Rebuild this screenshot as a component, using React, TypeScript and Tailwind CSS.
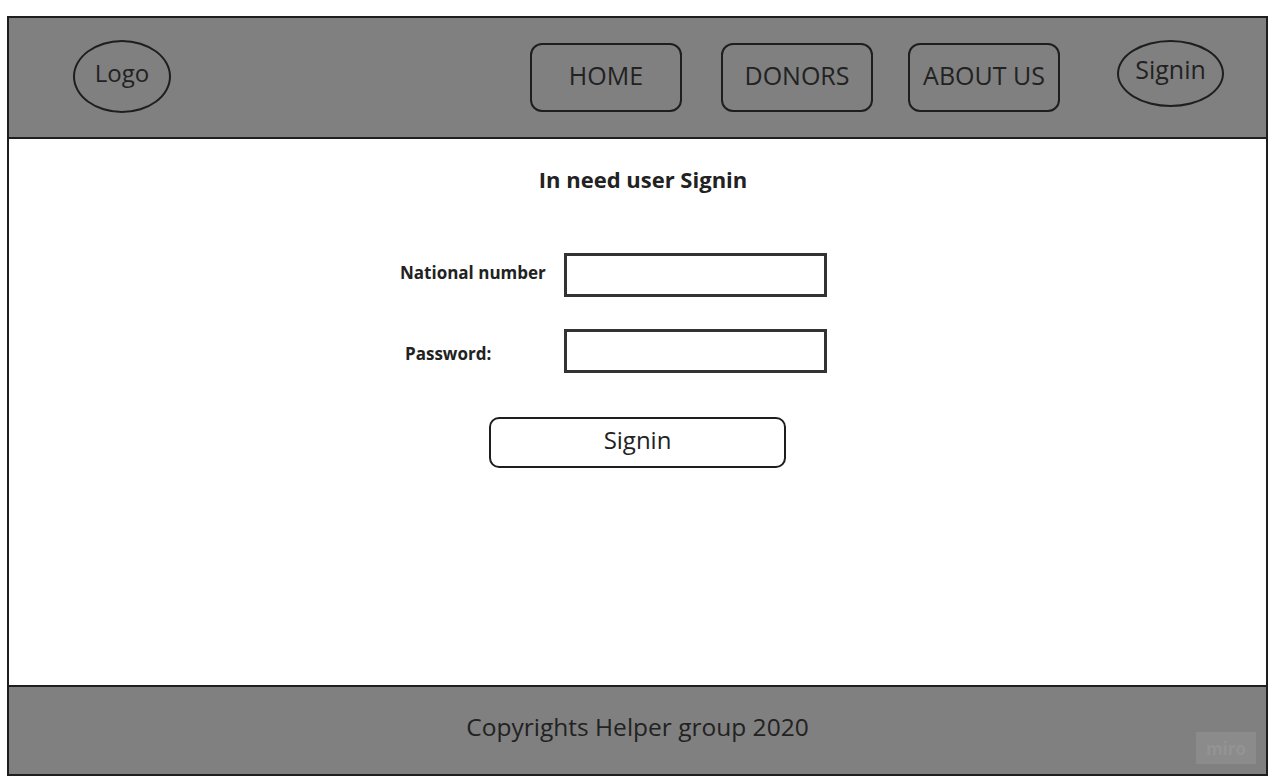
import React from "react";

export default function App() {
  const font = { fontFamily: '"Open Sans", "Noto Sans", sans-serif' };
  return (
    <div className="w-[1275px] h-[783px] bg-white pt-[16px] pl-[7px] text-[#222]" style={font}>
      <div className="w-[1261px] h-[760px] border-2 border-[#1e1e1e] flex flex-col">
        {/* Header */}
        <header className="h-[121px] bg-[#808080] border-b-2 border-[#1e1e1e] flex items-start pl-[64px] pr-[42px] shrink-0">
          <div className="mt-[22px] w-[98px] h-[73px] rounded-[50%] border-[2.5px] border-[#1e1e1e] flex items-center justify-center text-[24px] leading-none pb-[7px]">
            Logo
          </div>
          <div className="ml-auto flex items-start">
            <div className="mt-[25px] w-[152px] h-[69px] rounded-[12px] border-[2.5px] border-[#1e1e1e] flex items-center justify-center text-[25px] leading-none pb-[5px]">
              HOME
            </div>
            <div className="mt-[25px] ml-[39px] w-[152px] h-[69px] rounded-[12px] border-[2.5px] border-[#1e1e1e] flex items-center justify-center text-[25px] leading-none pb-[5px]">
              DONORS
            </div>
            <div className="mt-[25px] ml-[35px] w-[152px] h-[69px] rounded-[12px] border-[2.5px] border-[#1e1e1e] flex items-center justify-center text-[25px] leading-none pb-[5px]">
              ABOUT US
            </div>
            <div className="mt-[22px] ml-[57px] w-[107px] h-[67px] rounded-[50%] border-[2.5px] border-[#1e1e1e] flex items-center justify-center text-[25px] leading-none pb-[8px]">
              Signin
            </div>
          </div>
        </header>

        {/* Main */}
        <main className="flex-1 bg-white flex flex-col">
          <h1 className="mt-[26px] pl-[11px] text-center text-[22px] font-bold leading-[29px]">
            In need user Signin
          </h1>
          <div className="mt-[59px] pl-[391px] flex flex-col gap-[32px]">
            <div className="flex items-center">
              <span className="w-[164px] text-[17px] font-bold leading-none -mt-[5px]">National number</span>
              <div className="w-[263px] h-[44px] border-[3px] border-[#333]" />
            </div>
            <div className="flex items-center">
              <span className="w-[164px] pl-[5px] text-[17px] font-bold leading-none mt-[4px]">Password:</span>
              <div className="w-[263px] h-[44px] border-[3px] border-[#333]" />
            </div>
          </div>
          <div className="mt-[44px] pl-[480px]">
            <div className="w-[297px] h-[51px] rounded-[10px] border-[2.5px] border-[#1e1e1e] flex items-center justify-center text-[24px] leading-none pb-[6px]">
              Signin
            </div>
          </div>
        </main>

        {/* Footer */}
        <footer className="relative h-[89px] shrink-0 bg-[#808080] border-t-2 border-[#1e1e1e] flex items-center justify-center">
          <span className="text-[24.5px] leading-none -mt-[6px]">Copyrights Helper group 2020</span>
          <div className="absolute right-[10px] bottom-[10px] w-[60px] h-[32px] bg-[#8b8b8b] flex items-center justify-center">
            <span className="text-[17px] font-bold text-[#939393] leading-none">miro</span>
          </div>
        </footer>
      </div>
    </div>
  );
}
